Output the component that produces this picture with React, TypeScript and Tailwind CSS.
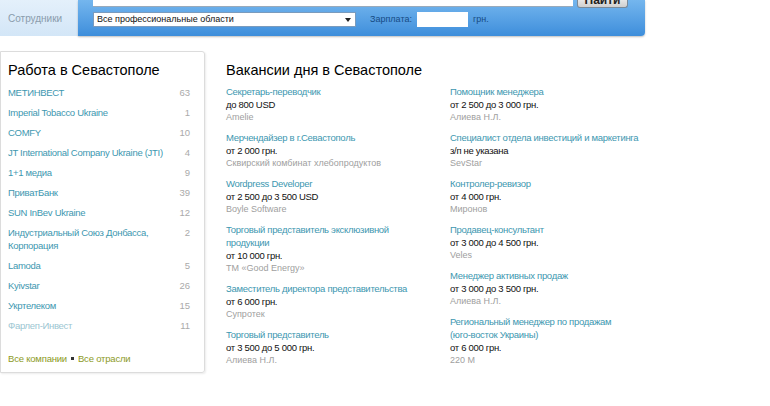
import React from "react";

const companies = [
  { name: "МЕТИНВЕСТ", count: 63 },
  { name: "Imperial Tobacco Ukraine", count: 1 },
  { name: "COMFY", count: 10 },
  { name: "JT International Company Ukraine (JTI)", count: 4 },
  { name: "1+1 медиа", count: 9 },
  { name: "ПриватБанк", count: 39 },
  { name: "SUN InBev Ukraine", count: 12 },
  { name: "Индустриальный Союз Донбасса,\nКорпорация", count: 2 },
  { name: "Lamoda", count: 5 },
  { name: "Kyivstar", count: 26 },
  { name: "Укртелеком", count: 15 },
  { name: "Фарлеп-Инвест", count: 11, faded: true },
];

const colLeft = [
  { title: "Секретарь-переводчик", pay: "до 800 USD", company: "Amelie" },
  { title: "Мерчендайзер в г.Севастополь", pay: "от 2 000 грн.", company: "Сквирский комбинат хлебопродуктов" },
  { title: "Wordpress Developer", pay: "от 2 500 до 3 500 USD", company: "Boyle Software" },
  { title: "Торговый представитель эксклюзивной\nпродукции", pay: "от 10 000 грн.", company: "ТМ «Good Energy»" },
  { title: "Заместитель директора представительства", pay: "от 6 000 грн.", company: "Супротек" },
  { title: "Торговый представитель", pay: "от 3 500 до 5 000 грн.", company: "Алиева Н.Л." },
];

const colRight = [
  { title: "Помощник менеджера", pay: "от 2 500 до 3 000 грн.", company: "Алиева Н.Л." },
  { title: "Специалист отдела инвестиций и маркетинга", pay: "з/п не указана", company: "SevStar" },
  { title: "Контролер-ревизор", pay: "от 4 000 грн.", company: "Миронов" },
  { title: "Продавец-консультант", pay: "от 3 000 до 4 500 грн.", company: "Veles" },
  { title: "Менеджер активных продаж", pay: "от 3 000 до 3 500 грн.", company: "Алиева Н.Л." },
  { title: "Региональный менеджер по продажам\n(юго-восток Украины)", pay: "от 6 000 грн.", company: "220 M" },
];

type Vacancy = { title: string; pay: string; company: string };

const VacancyColumn = ({ items }: { items: Vacancy[] }) => (
  <div className="w-[224px] flex flex-col gap-[7px]">
    {items.map((v, i) => (
      <div key={i} className="text-[9.5px] leading-[13px] tracking-[-0.3px]">
        <a className="block whitespace-pre-line text-[#3d97b0] w-[200px]">{v.title}</a>
        <div className="text-[#111]">{v.pay}</div>
        <div className="text-[9px] leading-[13px] tracking-normal text-[#a0a0a0]">{v.company}</div>
      </div>
    ))}
  </div>
);

const App = () => {
  return (
    <div className="w-[770px] h-[406px] bg-white overflow-hidden font-['Liberation_Sans',Arial,sans-serif]">
      {/* header */}
      <div className="flex w-[645px] h-[36px]">
        <div className="w-[78px] h-full bg-gradient-to-b from-[#e4f0fb] to-[#d3e6f7] flex items-center pl-[8px] text-[10px] text-[#8a9cac]">
          Сотрудники
        </div>
        <div className="flex-1 h-full rounded-br-[4px] bg-gradient-to-b from-[#74b6ee] to-[#3d8edb] shadow-[0_1px_2px_rgba(0,0,0,0.25)] pl-[15px]">
          <div className="flex h-[8px] items-start">
            <div className="w-[480px] h-[7px] bg-white border-b border-[#9ab]" />
            <div className="ml-[4px] w-[51px] h-[8px] overflow-hidden rounded-b-[3px] border border-t-0 border-[#7a8a99] bg-gradient-to-b from-[#e6e6e6] to-[#cfcfcf]">
              <div className="-mt-[7px] text-center text-[12px] font-bold leading-[14px] text-[#222]">Найти</div>
            </div>
          </div>
          <div className="flex items-center mt-[4px] h-[15px]">
            <div className="w-[263px] h-[15px] bg-white border border-[#7a9bbd] flex items-center justify-between pl-[3px] pr-[4px] text-[9px] text-[#111]">
              <span>Все профессиональные области</span>
              <span className="w-0 h-0 border-l-[3px] border-r-[3px] border-t-[4px] border-l-transparent border-r-transparent border-t-[#222]" />
            </div>
            <span className="ml-[14px] text-[9px] text-[#174b84]">Зарплата:</span>
            <div className="ml-[5px] w-[51px] h-[15px] bg-white" />
            <span className="ml-[5px] text-[9px] text-[#174b84]">грн.</span>
          </div>
        </div>
      </div>

      {/* content */}
      <div className="flex mt-[15px]">
        <div className="w-[205px] h-[322px] border border-[#dcdcdc] rounded-r-[3px] shadow-[1px_1px_2px_rgba(0,0,0,0.08)] pl-[7px] pr-[14px] pt-[10px]">
          <h2 className="text-[14.5px] leading-[17px] text-black">Работа в Севастополе</h2>
          <ul className="mt-[7px] flex flex-col gap-[7px]">
            {companies.map((c, i) => (
              <li key={i} className="flex justify-between text-[9.5px] leading-[13px] tracking-[-0.3px]">
                <a className={`whitespace-pre-line ${c.faded ? "text-[#9cc6d2]" : "text-[#3d97b0]"}`}>{c.name}</a>
                <span className="text-[#aaa] tracking-normal">{c.count}</span>
              </li>
            ))}
          </ul>
          <div className="mt-[20px] text-[9.5px] leading-[13px] tracking-[-0.2px] text-[#8c9a1e] flex items-center gap-[4px]">
            <a>Все компании</a>
            <span className="w-[3px] h-[3px] bg-[#333]" />
            <a>Все отрасли</a>
          </div>
        </div>

        <div className="ml-[21px] pt-[11px]">
          <h2 className="text-[14.5px] leading-[17px] text-black">Вакансии дня в Севастополе</h2>
          <div className="flex mt-[6px]">
            <VacancyColumn items={colLeft} />
            <VacancyColumn items={colRight} />
          </div>
        </div>
      </div>
    </div>
  );
};

export default App;
